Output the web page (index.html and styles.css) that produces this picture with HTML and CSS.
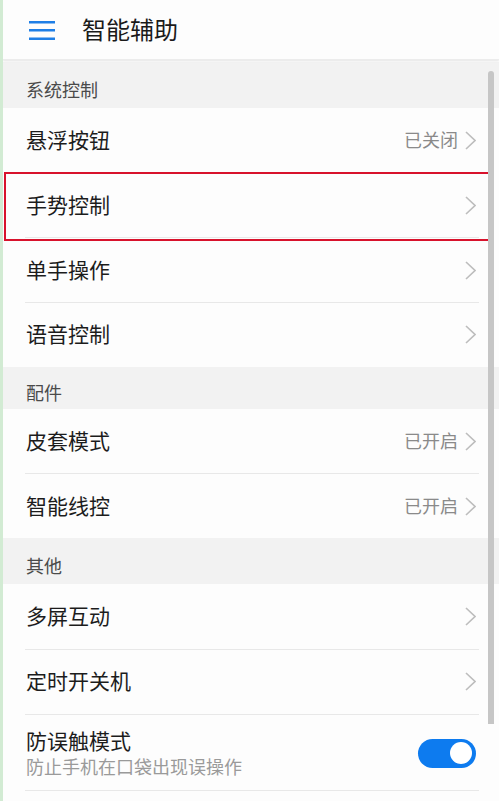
FILE: index.html
```html
<!DOCTYPE html>
<html lang="zh-CN">
<head>
<meta charset="utf-8">
<title>智能辅助</title>
<link rel="stylesheet" href="styles.css">
</head>
<body>
<div class="app">
  <header class="topbar">
    <svg class="menu" width="26" height="20" viewBox="0 0 26 20"><path d="M0 2.2H26M0 10.2H26M0 18.7H26" stroke="#1f7fe6" stroke-width="2.6" fill="none"/></svg>
    <h1 class="title">智能辅助</h1>
  </header>
  <main class="list">
    <div class="section s1">系统控制</div>
    <div class="group">
      <div class="row"><span class="label">悬浮按钮</span><span class="value">已关闭</span><svg class="chev" width="11" height="19" viewBox="0 0 11 19"><path d="M1 1L10 9.5L1 18" stroke="#bdbdbd" stroke-width="1.6" fill="none"/></svg></div>
      <div class="row"><span class="label">手势控制</span><svg class="chev" width="11" height="19" viewBox="0 0 11 19"><path d="M1 1L10 9.5L1 18" stroke="#bdbdbd" stroke-width="1.6" fill="none"/></svg></div>
      <div class="row"><span class="label">单手操作</span><svg class="chev" width="11" height="19" viewBox="0 0 11 19"><path d="M1 1L10 9.5L1 18" stroke="#bdbdbd" stroke-width="1.6" fill="none"/></svg></div>
      <div class="row"><span class="label">语音控制</span><svg class="chev" width="11" height="19" viewBox="0 0 11 19"><path d="M1 1L10 9.5L1 18" stroke="#bdbdbd" stroke-width="1.6" fill="none"/></svg></div>
    </div>
    <div class="section s2">配件</div>
    <div class="group">
      <div class="row"><span class="label">皮套模式</span><span class="value">已开启</span><svg class="chev" width="11" height="19" viewBox="0 0 11 19"><path d="M1 1L10 9.5L1 18" stroke="#bdbdbd" stroke-width="1.6" fill="none"/></svg></div>
      <div class="row"><span class="label">智能线控</span><span class="value">已开启</span><svg class="chev" width="11" height="19" viewBox="0 0 11 19"><path d="M1 1L10 9.5L1 18" stroke="#bdbdbd" stroke-width="1.6" fill="none"/></svg></div>
    </div>
    <div class="section s3">其他</div>
    <div class="group">
      <div class="row"><span class="label">多屏互动</span><svg class="chev" width="11" height="19" viewBox="0 0 11 19"><path d="M1 1L10 9.5L1 18" stroke="#bdbdbd" stroke-width="1.6" fill="none"/></svg></div>
      <div class="row"><span class="label">定时开关机</span><svg class="chev" width="11" height="19" viewBox="0 0 11 19"><path d="M1 1L10 9.5L1 18" stroke="#bdbdbd" stroke-width="1.6" fill="none"/></svg></div>
      <div class="row tall">
        <div class="texts">
          <span class="label">防误触模式</span>
          <span class="sub">防止手机在口袋出现误操作</span>
        </div>
        <span class="toggle"><span class="knob"></span></span>
      </div>
      <div class="row"><span class="label"></span></div>
    </div>
  </main>
  <div class="highlight"></div>
  <div class="scrollbar"></div>
</div>
</body>
</html>
```

FILE: styles.css
```css
html, body {
  margin: 0;
  padding: 0;
  background: #fdfdfd;
}
body {
  font-family: "Noto Sans CJK SC", "Noto Sans", sans-serif;
  color: #1c1c1c;
  width: 499px;
  height: 801px;
  overflow: hidden;
}
.app {
  position: relative;
  height: 801px;
  border-left: 3px solid #d2ebd3;
  background: #fdfdfd;
  overflow: hidden;
}
.topbar {
  height: 60px;
  box-sizing: border-box;
  display: flex;
  align-items: center;
  padding: 0 0 2px 26px;
  gap: 27px;
  background: #fdfdfd;
  box-shadow: 0 1px 2px rgba(0,0,0,0.10);
  border-bottom: 1px solid #ececec;
  position: relative;
  z-index: 1;
}
.menu { display: block; margin-top: 3px; }
.title {
  margin: 0;
  font-size: 24px;
  font-weight: 400;
  line-height: 30px;
  color: #1a1a1a;
}
.list {
  display: flex;
  flex-direction: column;
  padding-top: 2px;
}
.section {
  box-sizing: border-box;
  padding-left: 23px;
  font-size: 18px;
  line-height: 24px;
  color: #4a4a4a;
  background: #f2f2f2;
}
.s1 { height: 46px; padding-top: 15px; }
.s2 { height: 42px; padding-top: 13px; }
.s3 { height: 46px; padding-top: 15px; }
.group {
  display: flex;
  flex-direction: column;
  background: #fdfdfd;
}
.row {
  height: 64.7px;
  flex: none;
  box-sizing: border-box;
  margin: 0 20px 0 22px;
  padding: 0 3px 3px 1px;
  display: flex;
  align-items: center;
  border-top: 1px solid #e8e8e8;
}
.row:first-child {
  border-top: none;
}
.label {
  flex: 1;
  font-size: 21px;
  line-height: 28px;
  color: #1c1c1c;
}
.value {
  font-size: 18px;
  color: #8a8a8a;
  margin-right: 7px;
}
.chev { display: block; margin-top: 3px; }
.row.tall {
  height: 76px;
  align-items: flex-start;
  padding-top: 11px;
  padding-bottom: 0;
}
.texts {
  flex: 1;
  display: flex;
  flex-direction: column;
}
.texts .label {
  line-height: 28px;
}
.sub {
  font-size: 18px;
  line-height: 24px;
  color: #9a9a9a;
}
.toggle {
  margin-top: 13px;
  width: 58px;
  height: 29px;
  border-radius: 15px;
  background: #0d7bef;
  display: flex;
  align-items: center;
  justify-content: flex-end;
  padding-right: 4px;
  box-sizing: border-box;
}
.knob {
  width: 22px;
  height: 22px;
  border-radius: 50%;
  background: #ffffff;
}
.highlight {
  position: absolute;
  left: 1px;
  top: 172px;
  width: 488px;
  height: 69px;
  box-sizing: border-box;
  border: 2px solid #d8122c;
}
.scrollbar {
  position: absolute;
  left: 485px;
  top: 71px;
  width: 6px;
  height: 653px;
  background: #c6c6c6;
  border-radius: 3px 3px 0 0;
}
```
